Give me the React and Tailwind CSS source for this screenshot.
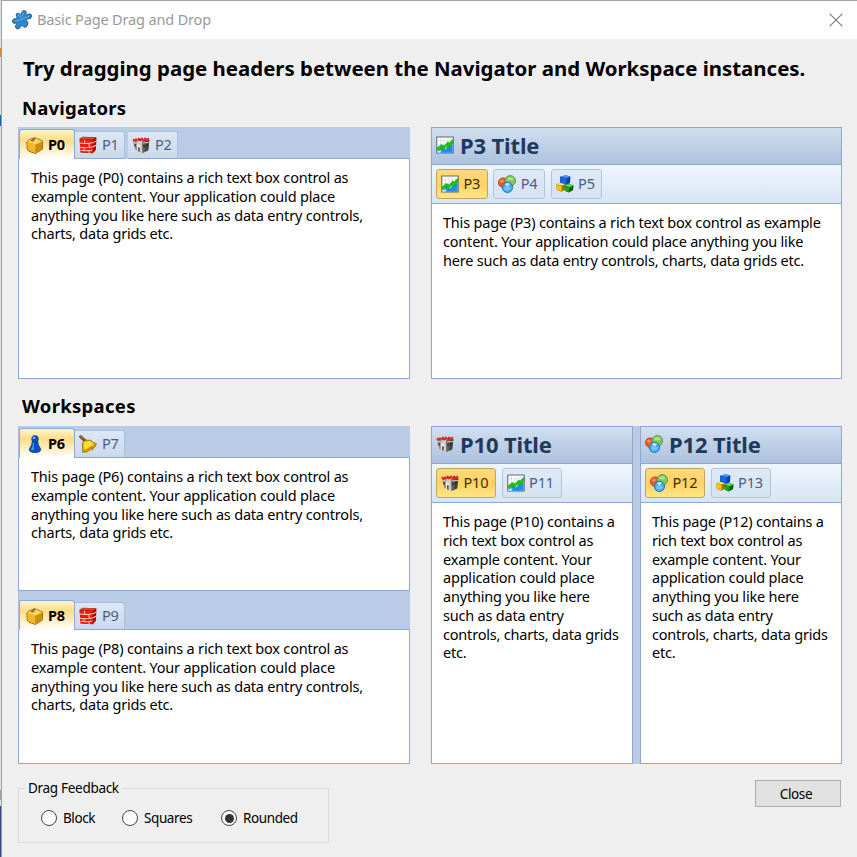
import React from 'react';

const icons = {
  box: (
    <g strokeLinejoin="round">
      <path d="M.8 5.2 3.4 2.8 9 2 14.8 4.6 14.6 11.6 8.4 15.5 2.6 13.6 1 11.6Z" fill="#e5a718" stroke="#86621a" strokeWidth=".8" />
      <path d="M1.2 5.4 8.2 7.8V15L2.8 13.2 1.4 11.4Z" fill="#f0b828" />
      <path d="M8.2 7.8 14.4 5V11.4L8.3 15.1Z" fill="#c98f10" />
      <path d="M1.2 5.1 3.6 3.1 9 2.3 14.4 4.8 8.2 7.5Z" fill="#ffd95a" />
      <path d="M3.6 4.2 5.2 3.2 7.6 3.9 6 4.9Z" fill="#86591a" />
      <path d="M5.2 3.6 7 .9 8.6 1.4 7.4 3.9Z" fill="#9d6c26" />
    </g>
  ),
  brick: (
    <g>
      <path d="M.5 2.4 3.4.6 15.5 1 15 12.3 12.4 15.4 1.4 14.6Z" fill="#9f0e0e" />
      <path d="M.6 2.8 12.2 3.4 12 15.2 1.5 14.4Z" fill="#ee1c10" />
      <path d="M.8 2.4 3.6.8 15.2 1.2 12.4 3.1Z" fill="#d9462f" />
      <path d="M.8 6.3Q6 7.2 12.2 6.1M1 10Q6 10.8 12 9.8M1.4 12.7Q6 13.4 12 12.5M5 3.3V6.5M9 6.7V10M4.4 10.2V12.8M9 13V15M12.3 6.1 15.2 4.6M12.2 9.8 15.1 8.2" fill="none" stroke="#ffc9b4" strokeWidth=".9" />
    </g>
  ),
  castle: (
    <g>
      <path d="M.8 3.6H4.8L5 13.2 3 12.2 1.8 8Z" fill="#8a8782" />
      <path d="M4.2 5.8H9.6L9.2 15.4 4.4 13.4Z" fill="#c9c7c3" />
      <path d="M4.4 7.4 7.4 8V14.6L4.4 13.4Z" fill="#eeedea" />
      <path d="M9 4.4 15.4 3.8 14.4 12.6 9.2 15.4Z" fill="#62605c" />
      <path d="M12.2 4.4 15.4 3.8 14.4 12.6 11.8 14Z" fill="#454340" />
      <path d="M.5 4.2.9 2.2 2.6 3.2 3.4 1.8 5 2.9 5.6 1 7.4 2.4 8.8 1 10.2 2.6 11.6 1 12.8 2.5 14.8 1.4 15.5 3.8 12.4 4.8 9.4 4 7 4.8 4.6 3.9 2.6 5Z" fill="#d62a20" />
      <path d="M1.6 5.8 4.2 6.4M9.6 6.2 15 5.7" stroke="#f0efec" strokeWidth=".7" />
      <path d="M5.3 10.4q.8-1.5 1.6.1V14.3L5.3 13.6Z" fill="#6b4c3a" />
      <path d="M10.8 7.6v2.4M13.2 7.2v2.2M2.7 7.2v2.2" stroke="#1f1f1f" strokeWidth=".9" />
    </g>
  ),
  chart: (
    <g>
      <path d="M.7.8H15.3V15.2H.7Z" fill="#fff" stroke="#646464" strokeWidth=".9" />
      <path d="M4 1.2V14M7 1.2V14M10 1.2V14M13 1.2V14M1 4.4H15M1 7.4H15M1 10.4H15" stroke="#cbcbd9" strokeWidth=".5" />
      <path d="M1.2 13 5 10.5 8 12 11 8.5 14.8 7.4V14.8H1.2Z" fill="#1f8ee8" />
      <path d="M1.2 13.4 5 12.6 4 14.8H1.2Z" fill="#cfe6fa" />
      <path d="M1 10.4 4.6 7.6 7.4 8.6 10.2 5.4 11.8 6 15 2.8V6.6L11 10 9.5 9.2 7 12 4.5 10.8 1 12.8Z" fill="#16c400" stroke="#079300" strokeWidth=".3" />
    </g>
  ),
  rings: (
    <g strokeWidth=".8">
      <circle cx="4.6" cy="6.8" r="4.2" fill="#f15b28" stroke="#b73e1b" />
      <circle cx="10.9" cy="5.2" r="4.7" fill="#83c957" stroke="#4b963a" />
      <circle cx="8.4" cy="11" r="4.6" fill="#43adf4" stroke="#176fbd" />
      <path d="M6.4 7.8Q8.4 6.2 10.6 7.8L9 10.2H7.6Z" fill="#dff4ef" opacity=".8" stroke="none" />
      <ellipse cx="11" cy="3.4" rx="2.7" ry="1.5" fill="#c6edab" opacity=".65" />
      <ellipse cx="3.4" cy="5.6" rx="1.6" ry="1.3" fill="#ffb08a" opacity=".6" />
      <ellipse cx="8.3" cy="12" rx="2.8" ry="1.7" fill="#a7ddff" opacity=".5" />
    </g>
  ),
  cubes: (
    <g>
      <path d="M3.6 1.5 8.5.3 12.8 1.3 12.4 7.4 8.5 8.8 3.8 7.4Z" fill="#063fae" />
      <path d="M3.6 1.5 8.5.3 12.8 1.3 9.6 2.6Z" fill="#4b9bff" />
      <path d="M3.7 1.9 9.4 2.8 9.2 8.4 3.9 7.2Z" fill="#1765dd" />
      <path d="M.3 8.2 4 7.2 8 8.2 7.6 13.4 4.8 14.8.7 13.4Z" fill="#9c7600" />
      <path d="M.3 8.2 4 7.2 8 8.2 5 9.4Z" fill="#ffee6a" />
      <path d="M.4 8.7 4.9 9.8V14.5L.8 13.2Z" fill="#fcc410" />
      <path d="M7.6 9.5 11.5 8 15.7 9.2 15.1 13.6 11.3 15.6 7.8 14.1Z" fill="#05600d" />
      <path d="M7.6 9.5 11.5 8 15.7 9.2 12 10.8Z" fill="#65dc47" />
      <path d="M7.7 10 12 11.2 11.3 15.2 7.9 13.9Z" fill="#18a719" />
    </g>
  ),
  pawn: (
    <g>
      <path d="M5.6 5.5H10.4Q10.5 9 13 12.2Q14 15.5 8 15.7Q2 15.5 3 12.2Q5.5 9 5.6 5.5Z" fill="#0750bd" stroke="#0b3479" strokeWidth=".6" />
      <path d="M6.1 6.5Q6.4 10.2 4.4 13Q5.8 13.9 7 13.3L7.3 6Z" fill="#4094f4" />
      <ellipse cx="8" cy="3.6" rx="3" ry="3.2" fill="#0b4fb8" stroke="#143b78" strokeWidth=".5" />
      <ellipse cx="7.1" cy="2.6" rx="1.3" ry="1" fill="#75b6ff" />
    </g>
  ),
  bell: (
    <g strokeLinejoin="round">
      <path d="M1.4 1.5 5.2 5" stroke="#73461c" strokeWidth="2.6" strokeLinecap="round" />
      <path d="M1.4 1.2 4.7 4.2" stroke="#b57a33" strokeWidth=".9" />
      <path d="M5.6 4.6 10.6 4.6 12.2 6.4 15.4 7.8 14.4 10.4 7 15 3.2 15.4 3.4 12.4 3 7.3Z" fill="#f0ae0b" stroke="#8d6700" strokeWidth=".7" />
      <path d="M4.6 6.4 9.8 5.4 13 7.9 5.6 12.8 4.4 12.4Z" fill="#ffe138" />
      <path d="M4 14.2Q8.2 13 14.2 8.9" fill="none" stroke="#b67f00" strokeWidth=".8" />
      <circle cx="11.6" cy="12.2" r="1.3" fill="#b98708" />
    </g>
  ),
};

function Icon({ name }) {
  return <svg viewBox="0 0 16 16" className="h-[18px] w-[18px] shrink-0">{icons[name]}</svg>;
}

function TopTab({ icon, label, active }) {
  return active ? (
    <div className="flex h-full w-[56px] items-center gap-[4px] rounded-t-[3px] border border-b-0 border-[#8ea9cf] bg-gradient-to-b from-[#fff3cf] via-[#ffdd84] via-35% to-white pl-[6px]">
      <Icon name={icon} />
      <span className="text-[14.5px] font-bold tracking-[-0.2px] text-black">{label}</span>
    </div>
  ) : (
    <div className="mr-[3px] flex h-[28px] w-[50px] items-center gap-[5px] self-end rounded-tr-[3px] border-r border-t border-b border-[#a9c0df] border-b-[#8ea9cf] bg-gradient-to-b from-[#dce7f5] to-[#c9d9ed] pl-[4px]">
      <Icon name={icon} />
      <span className="text-[14.5px] tracking-[-0.2px] text-[#4b5d80]">{label}</span>
    </div>
  );
}

function Lines({ lines, className }) {
  return (
    <div className={'text-[14.5px] leading-[18.75px] tracking-[-0.2px] text-black ' + className}>
      {lines.map((line) => <div key={line} className="whitespace-nowrap">{line}</div>)}
    </div>
  );
}

function TabPage({ tabs, page, tabArea, className }) {
  return (
    <section className={'flex flex-col bg-[#bacce5] ' + className}>
      <div className={'flex shrink-0 items-end border-l border-[#a9c0df] ' + tabArea}>
        {tabs.map(([icon, label], i) => (
          <div key={label} className={i === 0 ? 'flex h-[30px]' : 'flex h-[30px] border-b border-transparent -mb-px'}>
            <TopTab icon={icon} label={label} active={i === 0} />
          </div>
        ))}
        <div className="-ml-[3px] grow self-stretch border-b border-[#8ea9cf]" />
      </div>
      <div className="min-h-0 grow border border-t-0 border-[#8ea9cf] bg-white pl-[12px] pt-[9px]">
        <Lines
          lines={[
            `This page (${page}) contains a rich text box control as`,
            'example content. Your application could place',
            'anything you like here such as data entry controls,',
            'charts, data grids etc.',
          ]}
        />
      </div>
    </section>
  );
}

function BarButton({ icon, label, active }) {
  const width = label.length > 2 ? 'w-[60px]' : 'w-[51.7px]';
  const tone = active
    ? 'border-[#c6a35d] bg-gradient-to-b from-[#ffd981] via-[#ffd262] to-[#ffe686] text-[#392d15]'
    : 'border-[#b1c3dd] bg-gradient-to-b from-[#dfe9f6] to-[#d6e3f2] text-[#4b5d80]';
  return (
    <div className={`flex h-[30px] items-center gap-[4.5px] rounded-[3px] border pl-[4px] text-[14.5px] tracking-[-0.2px] ${width} ${tone}`}>
      <Icon name={icon} />
      <span>{label}</span>
    </div>
  );
}

function HeaderPage({ title, icon, tabs, lines, className }) {
  return (
    <section className={'flex flex-col border border-[#8ea9cf] bg-white ' + className}>
      <div className="flex h-[37px] shrink-0 items-center gap-[6px] border-b border-[#8ea9cf] bg-gradient-to-b from-[#d1dfef] to-[#adc1de] pb-[2px] pl-[4px]">
        <Icon name={icon} />
        <h3 className="text-[22px] font-bold leading-none tracking-[-0.15px] text-[#1e395b]">{title}</h3>
      </div>
      <div className="flex h-[39px] shrink-0 items-center gap-[5.6px] border-b border-[#8ea9cf] bg-gradient-to-b from-[#eff5fd] to-[#d8e5f4] pl-[4px]">
        {tabs.map(([name, label], i) => <BarButton key={label} icon={name} label={label} active={i === 0} />)}
      </div>
      <Lines lines={lines} className="pl-[11px] pt-[9px]" />
    </section>
  );
}

const narrow = (page) => [
  `This page (${page}) contains a`,
  'rich text box control as',
  'example content. Your',
  'application could place',
  'anything you like here',
  'such as data entry',
  'controls, charts, data grids',
  'etc.',
];

function Radio({ label, checked, className }) {
  return (
    <label className={'flex items-center gap-[6px] ' + className}>
      <span className="flex h-4 w-4 items-center justify-center rounded-full border border-[#444] bg-white">
        {checked && <span className="h-[9px] w-[9px] rounded-full bg-[#333]" />}
      </span>
      <span>{label}</span>
    </label>
  );
}

export default function App() {
  return (
    <div className="flex h-[857px] w-[857px] overflow-hidden bg-[#efefef] font-['Noto_Sans',sans-serif]">
      <div className="flex w-[2px] shrink-0 flex-col border-r border-[#9a9ca6] bg-[#dfe1e8]">
        <div className="mt-[48px] h-[9px] bg-[#d28c38]" />
        <div className="mt-[58px] h-[11px] bg-[#1766b5]" />
        <div className="mt-[664px] h-[10px] bg-[#a5a6aa]" />
        <div className="mt-[6px] grow bg-[#34487d]" />
      </div>
      <main className="flex min-w-0 grow flex-col border-t border-[#a3a3a3]">
        <header className="flex h-[38px] shrink-0 items-center bg-white pl-[10px] pr-[14px]">
          <svg viewBox="0 0 20 20" className="h-5 w-5">
            <path d="M4.6 3.6Q6.4 2.4 8 4.4Q9.6 5 9.6 3Q9.8.5 12.4.5Q15.2 1 14 3.8Q14 5.6 16 4.2Q19.4 3 19.6 6Q19.4 9.4 16.2 8.8Q13.8 9 14.4 10.6Q17 12.4 15.6 15.2Q13.6 18.6 11.4 16.8Q10.2 14.6 9 16Q7.6 19.8 4.6 18.8Q2.2 17 4.4 14.2Q4.8 12.6 3.2 13.3Q.2 13.8.4 10.8Q1.4 8 4 8.8Q5.6 8.4 4.8 6.6Q3.6 5 4.6 3.6Z" fill="#2f87cb" stroke="#2a5676" strokeWidth=".9" />
            <path d="M5.8 4.6Q7.6 6.6 9.4 6.2Q11.3 5.6 11.4 2.6M3 10.8 6.4 10.2 10 8.8 17 6.4" fill="none" stroke="#5aafe8" strokeWidth="1.1" />
          </svg>
          <span className="ml-[5px] grow text-[14.5px] tracking-[-0.15px] text-[#999]">Basic Page Drag and Drop</span>
          <svg viewBox="0 0 14 14" className="h-[14px] w-[14px]"><path d="M.8.8 13.2 13.2M13.2.8.8 13.2" stroke="#777" strokeWidth="1.1" /></svg>
        </header>

        <div className="flex grow flex-col pl-4 pr-[15px]">
          <h1 className="mt-[14px] h-[30px] whitespace-nowrap pl-[5px] text-[20.4px] font-bold leading-[30px] tracking-[0.01px]">Try dragging page headers between the Navigator and Workspace instances.</h1>
          <h2 className="h-[44px] pl-[4px] pt-[11px] text-[18.5px] font-bold leading-[28px] tracking-[0.2px]">Navigators</h2>
          <div className="flex h-[252px] shrink-0 gap-[21px]">
            <TabPage className="w-[392px]" tabArea="h-[32px]" page="P0" tabs={[['box', 'P0'], ['brick', 'P1'], ['castle', 'P2']]} />
            <HeaderPage
              className="w-[411px]"
              title="P3 Title"
              icon="chart"
              tabs={[['chart', 'P3'], ['rings', 'P4'], ['cubes', 'P5']]}
              lines={[
                'This page (P3) contains a rich text box control as example',
                'content. Your application could place anything you like',
                'here such as data entry controls, charts, data grids etc.',
              ]}
            />
          </div>
          <h2 className="h-[47px] shrink-0 pl-[4px] pt-[13px] text-[18.5px] font-bold leading-[28px] tracking-[0.3px]">Workspaces</h2>
          <div className="flex h-[338px] shrink-0 gap-[21px]">
            <div className="flex w-[392px] flex-col">
              <TabPage className="h-[165px]" tabArea="h-[32px]" page="P6" tabs={[['pawn', 'P6'], ['bell', 'P7']]} />
              <TabPage className="h-[173px]" tabArea="h-[39px]" page="P8" tabs={[['box', 'P8'], ['brick', 'P9']]} />
            </div>
            <div className="flex w-[411px] gap-[7px] bg-[#bacce5]">
              <HeaderPage className="w-[202px]" title="P10 Title" icon="castle" tabs={[['castle', 'P10'], ['chart', 'P11']]} lines={narrow('P10')} />
              <HeaderPage className="w-[202px]" title="P12 Title" icon="rings" tabs={[['rings', 'P12'], ['cubes', 'P13']]} lines={narrow('P12')} />
            </div>
          </div>
          <footer className="flex items-start justify-between text-[13.5px] tracking-[-0.4px]">
            <fieldset className="mt-[14px] h-[65px] w-[311px] border border-[#dcdcdc] pl-[22px]">
              <legend className="-ml-[16px] px-[3px] leading-[20px] tracking-[-0.3px]">Drag Feedback</legend>
              <div className="flex pt-[10px] leading-5">
                <Radio label="Block" className="w-[81px]" />
                <Radio label="Squares" className="w-[99px]" />
                <Radio label="Rounded" checked className="w-[90px]" />
              </div>
            </fieldset>
            <button className="mr-px mt-[16px] h-[27px] w-[86px] border border-[#adadad] bg-[#e1e1e1] pr-[4px] pt-px">Close</button>
          </footer>
        </div>
      </main>
    </div>
  );
}
